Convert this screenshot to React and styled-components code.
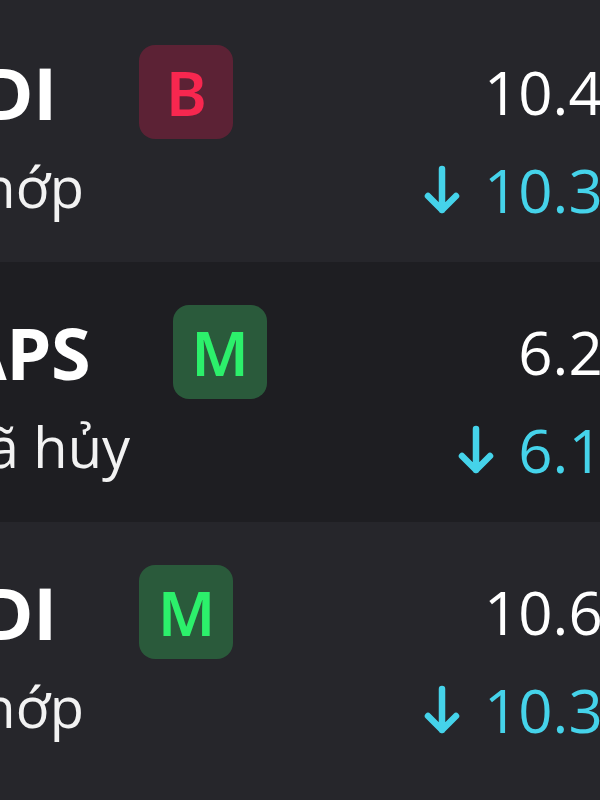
import React from "react";
import styled, { createGlobalStyle } from "styled-components";

const Global = createGlobalStyle`
  html, body { margin: 0; padding: 0; background: #26262b; }
  body { font-family: "Open Sans", "Noto Sans", sans-serif; }
`;

const Viewport = styled.div`
  width: 600px;
  height: 800px;
  overflow: hidden;
  background: #26262b;
`;

const List = styled.div`
  margin-left: -53px;
  width: 690px;
  padding-top: 2px;
  display: flex;
  flex-direction: column;
`;

const Row = styled.div`
  height: 260px;
  box-sizing: border-box;
  padding-top: 43px;
  background: ${(p) => (p.$alt ? "#1e1e22" : "#26262b")};
  display: flex;
  flex-direction: column;
`;

const TopLine = styled.div`
  height: 94px;
  display: flex;
  align-items: center;
`;

const BottomLine = styled.div`
  margin-top: 16px;
  height: 70px;
  display: flex;
  align-items: center;
`;

const Ticker = styled.span`
  margin-left: 10px;
  font-size: 72px;
  line-height: 1;
  font-weight: 700;
  color: #ffffff;
  letter-spacing: -0.5px;
`;

const Badge = styled.span`
  margin-left: 83px;
  width: 94px;
  height: 94px;
  border-radius: 16px;
  display: flex;
  align-items: center;
  justify-content: center;
  font-family: "Noto Sans", "Open Sans", sans-serif;
  font-size: 62px;
  line-height: 1;
  font-weight: 600;
  background: ${(p) => (p.$side === "B" ? "#5c2235" : "#2a5a3b")};
  color: ${(p) => (p.$side === "B" ? "#f7274f" : "#2cf06b")};
`;

const Spacer = styled.span`
  flex: 1;
`;

const Price = styled.span`
  font-size: 60px;
  line-height: 1;
  font-weight: 400;
  color: #ffffff;
`;

const Status = styled.span`
  font-size: 56px;
  line-height: 1;
  font-weight: 400;
  color: #f2f2f2;
  margin-bottom: 8px;
`;

const Matched = styled.span`
  display: flex;
  align-items: center;
  gap: 23px;
  font-size: 60px;
  line-height: 1;
  color: #45d3ea;
`;

const ArrowDown = () => (
  <svg width="38" height="50" viewBox="0 0 38 50" fill="none" aria-hidden="true">
    <path
      d="M19 4 V45 M5 31 L19 45 L33 31"
      stroke="#45d3ea"
      strokeWidth="6.5"
      strokeLinecap="round"
      strokeLinejoin="round"
    />
  </svg>
);

const orders = [
  { ticker: "IDI", side: "B", status: "Khớp", price: "10.45", matched: "10.35" },
  { ticker: "APS", side: "M", status: "Đã hủy", price: "6.25", matched: "6.15" },
  { ticker: "IDI", side: "M", status: "Khớp", price: "10.65", matched: "10.35" },
];

export default function App() {
  return (
    <>
      <Global />
      <Viewport>
        <List>
          {orders.map((o, i) => (
            <Row key={i} $alt={i % 2 === 1}>
              <TopLine>
                <Ticker>{o.ticker}</Ticker>
                <Badge $side={o.side}>{o.side}</Badge>
                <Spacer />
                <Price>{o.price}</Price>
              </TopLine>
              <BottomLine>
                <Status>{o.status}</Status>
                <Spacer />
                <Matched>
                  <ArrowDown />
                  {o.matched}
                </Matched>
              </BottomLine>
            </Row>
          ))}
        </List>
      </Viewport>
    </>
  );
}
